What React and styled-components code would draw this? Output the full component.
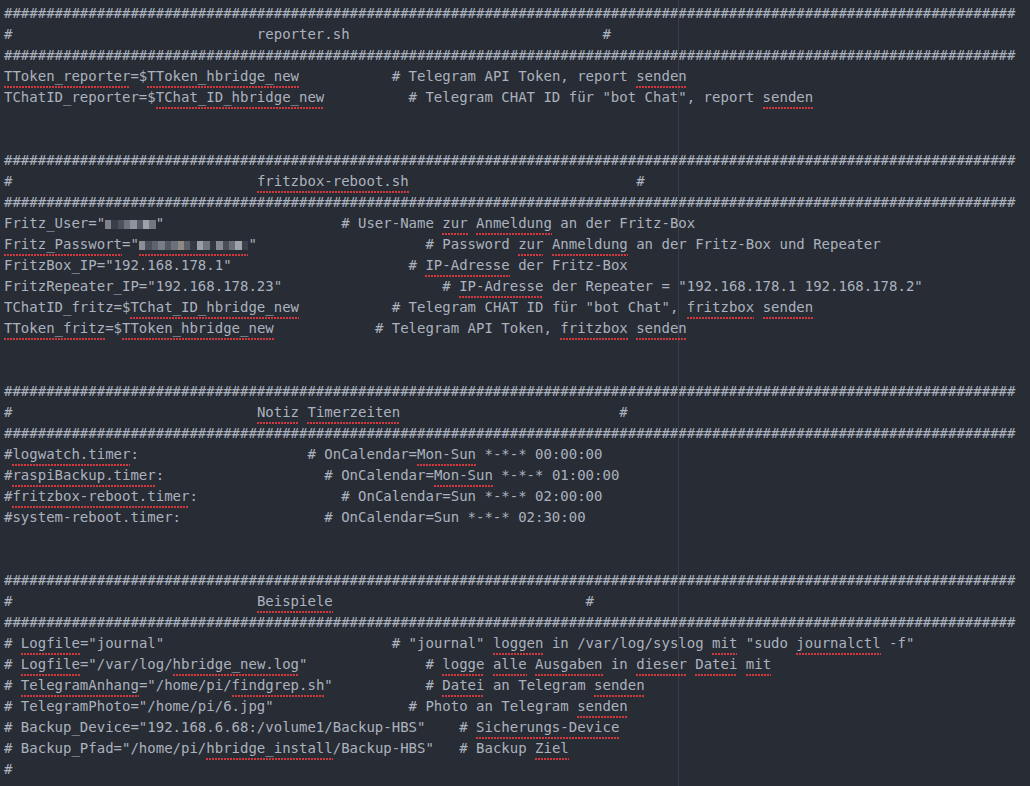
import React from "react";
// Import styles
import styled, { createGlobalStyle } from "styled-components";

// Markup in the lines: ~word~ = spellcheck mark, @n@ = blurred value n chars wide
const HASHES = "#".repeat(120);

const visibleLength = (text) =>
  text.replace(/~/g, "").replace(/@(\d+)@/g, (m, n) => "x".repeat(Number(n))).length;

// pad the left part with spaces so the right part starts at column `col`
const row = (left, col, right) =>
  left + " ".repeat(Math.max(1, col - visibleLength(left))) + right;

const header = (title, col) => row(row("#", 30, title), col, "#");

const LINES = [
  HASHES,
  header("reporter.sh", 71),
  HASHES,
  row("~TToken_reporter~=$~TToken_hbridge_new~", 46, "# Telegram API Token, report ~senden~"),
  row("TChatID_reporter=$~TChat_ID_hbridge_new~", 48, '# Telegram CHAT ID für "bot Chat", report ~senden~'),
  "",
  "",
  HASHES,
  header("~fritzbox-reboot.sh~", 75),
  HASHES,
  row('Fritz_User="@6@"', 40, "# User-Name ~zur~ ~Anmeldung~ an der Fritz-Box"),
  row('~Fritz_Passwort~="~@13@~"', 50, "# Password ~zur~ ~Anmeldung~ an der Fritz-Box und Repeater"),
  row('FritzBox_IP="192.168.178.1"', 48, "# ~IP-Adresse~ der Fritz-Box"),
  row('FritzRepeater_IP="192.168.178.23"', 52, '# ~IP-Adresse~ der Repeater = "192.168.178.1 192.168.178.2"'),
  row("TChatID_fritz=$~TChat_ID_hbridge_new~", 46, '# Telegram CHAT ID für "bot Chat", ~fritzbox~ ~senden~'),
  row("~TToken_fritz~=$~TToken_hbridge_new~", 44, "# Telegram API Token, ~fritzbox~ ~senden~"),
  "",
  "",
  HASHES,
  header("~Notiz~ ~Timerzeiten~", 73),
  HASHES,
  row("#~logwatch.timer~:", 36, "# OnCalendar=~Mon-Sun~ *-*-* 00:00:00"),
  row("#~raspiBackup.timer~:", 38, "# OnCalendar=~Mon-Sun~ *-*-* 01:00:00"),
  row("#~fritzbox-reboot.timer~:", 40, "# OnCalendar=Sun *-*-* 02:00:00"),
  row("#system-reboot.timer:", 38, "# OnCalendar=Sun *-*-* 02:30:00"),
  "",
  "",
  HASHES,
  header("~Beispiele~", 69),
  HASHES,
  row('# ~Logfile~="journal"', 46, '# "journal" ~loggen~ in /var/log/syslog ~mit~ "sudo ~journalctl~ -f"'),
  row('# ~Logfile~="/var/log/~hbridge_new.log~"', 50, "# ~logge~ ~alle~ ~Ausgaben~ in ~dieser~ ~Datei~ ~mit~"),
  row('# ~TelegramAnhang~="/home/pi/~findgrep.sh~"', 50, "# ~Datei~ an Telegram ~senden~"),
  row('# TelegramPhoto="/home/pi/6.jpg"', 48, "# Photo an Telegram ~senden~"),
  row('# Backup_Device="192.168.6.68:/volume1/Backup-HBS"', 54, "# ~Sicherungs-Device~"),
  row('# Backup_Pfad="/home/pi/~hbridge_install~/Backup-HBS"', 54, "# Backup ~Ziel~"),
  "#",
];

// pixel mosaics of the blurred secrets
const MOSAICS = {
  6: ["#7d818a", "#3a3e48", "#4d515b", "#6f737c", "#8f939b", "#555963", "#9da1a8", "#737780"],
  13: [
    "#8a8e96", "#4b4f59", "#5f636d", "#787c85", "#535761", "#6c707a", "#8e8a80",
    "#5a5e68", "#363a44", "#9a9ea5", "#70747d", "#33373f", "#858991", "#4a4e57",
    "#6a6e78", "#9fa3aa", "#3c404a",
  ],
};

function renderPlain(text, key) {
  const parts = text.split(/(@\d+@)/);
  return parts.map((part, i) => {
    const m = part.match(/^@(\d+)@$/);
    if (m) {
      const n = Number(m[1]);
      return (
        <Blur key={`${key}-${i}`} $chars={n}>
          {MOSAICS[n].map((c, j) => (
            <Pixel key={j} style={{ background: c }} />
          ))}
        </Blur>
      );
    }
    return part;
  });
}

function renderLine(text) {
  const parts = text.split(/(~[^~]*~)/);
  return parts.map((part, i) => {
    if (part.startsWith("~") && part.endsWith("~") && part.length > 1) {
      return <Typo key={i}>{renderPlain(part.slice(1, -1), i)}</Typo>;
    }
    return <React.Fragment key={i}>{renderPlain(part, i)}</React.Fragment>;
  });
}

function App() {
  return (
    <>
      <GlobalStyle />
      <Editor>
        <WrapGuide />
        {LINES.map((line, i) => (
          <Line key={i}>{line ? renderLine(line) : " "}</Line>
        ))}
      </Editor>
    </>
  );
}

const GlobalStyle = createGlobalStyle`
  html, body {
    margin: 0;
    padding: 0;
    background: #282c34;
  }
`;

const Editor = styled.div`
  position: relative;
  height: 100vh;
  overflow: hidden;
  box-sizing: border-box;
  padding: 3px 0 0 4px;
  background: #282c34;
  color: #abb2bf;
  font-family: "DejaVu Sans Mono", "Liberation Mono", monospace;
  font-size: 14px;
  line-height: 21px;
`;

const WrapGuide = styled.div`
  position: absolute;
  top: 0;
  bottom: 0;
  left: calc(4px + 80ch);
  width: 1px;
  background: #393d48;
`;

const Line = styled.div`
  height: 21px;
  white-space: pre;
`;

const Typo = styled.span`
  position: relative;
  display: inline-block;
  height: 21px;
  vertical-align: top;
  &::after {
    content: "";
    position: absolute;
    left: 0;
    right: 0;
    bottom: -1px;
    height: 2px;
    background: repeating-linear-gradient(
      90deg,
      #d03a3e 0 2px,
      transparent 2px 3px
    );
  }
`;

const Blur = styled.span`
  display: inline-flex;
  width: ${(p) => p.$chars}ch;
  height: 9px;
  vertical-align: middle;
  filter: blur(0.4px);
`;

const Pixel = styled.span`
  flex: 1;
`;

export default App;
